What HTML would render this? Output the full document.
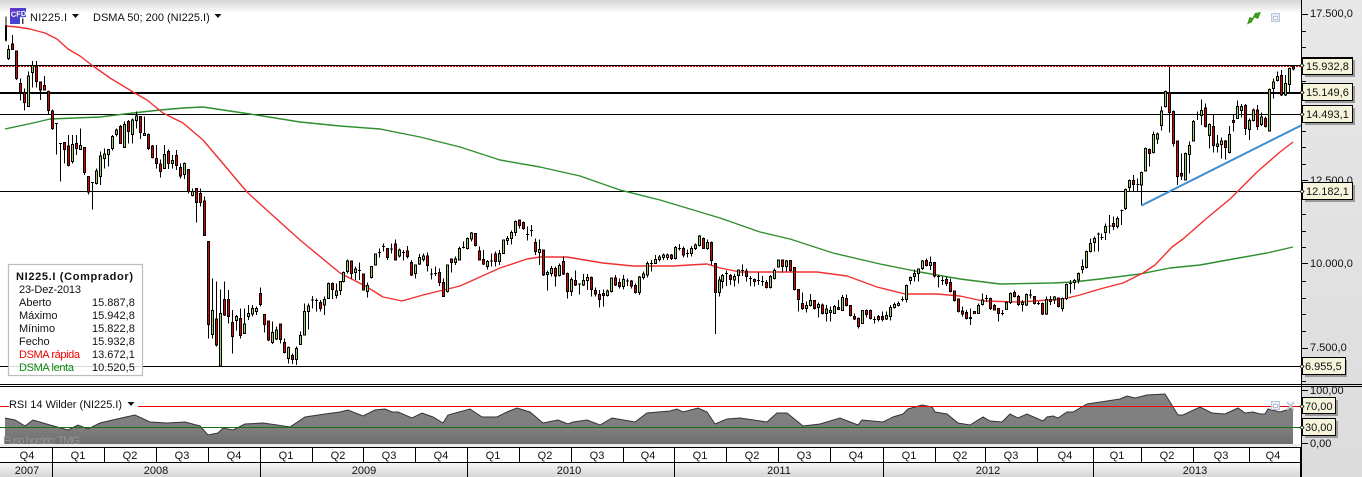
<!DOCTYPE html>
<html><head><meta charset="utf-8"><title>NI225.I</title>
<style>
html,body{margin:0;padding:0;background:#fff;width:1362px;height:477px;overflow:hidden}
svg{display:block;font-family:"Liberation Sans",sans-serif;font-size:11px;fill:#111}
.c path{vector-effect:non-scaling-stroke;stroke:#000;stroke-width:1;shape-rendering:crispEdges}
.w{fill:none}.g{fill:#9ccf66}.r{fill:#dd0000}
.tag{fill:#f6f5dc;stroke:#000}
.sh{fill:#9a9a9a;stroke:none}
.q{text-anchor:middle}
</style></head><body>
<svg width="1362" height="477" viewBox="0 0 1362 477" xmlns="http://www.w3.org/2000/svg">
<defs>
<linearGradient id="top" x1="0" y1="0" x2="0" y2="1"><stop offset="0" stop-color="#d4d4d4"/><stop offset="1" stop-color="#fff"/></linearGradient>
<linearGradient id="yr" x1="0" y1="0" x2="0" y2="1"><stop offset="0" stop-color="#f6f6f6"/><stop offset="1" stop-color="#d6d6d6"/></linearGradient>
<linearGradient id="rsi" gradientUnits="userSpaceOnUse" x1="0" y1="394" x2="0" y2="444"><stop offset="0" stop-color="#838383"/><stop offset=".7" stop-color="#7e7e7e"/><stop offset="1" stop-color="#6e6e6e"/></linearGradient>
<linearGradient id="ic" x1="0" y1="0" x2="1" y2="1"><stop offset="0" stop-color="#6a30c8"/><stop offset="1" stop-color="#3050d0"/></linearGradient>
<linearGradient id="pn" x1="0" y1="0" x2="0" y2="1"><stop offset="0" stop-color="#e8e8e8"/><stop offset="1" stop-color="#dcdcdc"/></linearGradient>
</defs>
<rect width="1362" height="477" fill="#fff"/>
<rect x="0" y="0" width="1301" height="13" fill="url(#top)"/>
<rect x="1301" y="0" width="61" height="477" fill="url(#pn)"/>

<!-- horizontal levels -->
<g shape-rendering="crispEdges">
<rect x="0" y="65" width="1301" height="1" fill="#000"/>
<line x1="0" y1="66.5" x2="1301" y2="66.5" stroke="#e00000" stroke-width="1" stroke-dasharray="2 1"/>
<rect x="0" y="92" width="1301" height="2" fill="#000"/>
<rect x="0" y="114" width="1301" height="1" fill="#000"/>
<rect x="0" y="191" width="1301" height="1" fill="#000"/>
<rect x="0" y="366" width="1301" height="1" fill="#000"/>
</g>

<!-- moving averages -->
<polyline fill="none" stroke="#2f8f2f" stroke-width="1.4" stroke-linejoin="round" points="5,129 33,123 50,119 100,117 133,113 160,110 183,108 203,107 250,114 300,122 340,126 380,129 420,137 460,147 500,160 540,167 580,176 620,190 660,200 720,218 760,232 790,239 833,253 880,264 920,272 960,279 1000,284 1053,283 1073,282 1100,279 1140,274 1170,268 1200,265 1233,259 1267,253 1293,247"/>
<polyline fill="none" stroke="#f23030" stroke-width="1.4" stroke-linejoin="round" points="6,26 17,27 30,29 45,33 57,39 68,49 80,56 93,66 110,78 133,92 147,100 163,113 183,123 203,140 220,160 247,192 270,213 300,240 340,273 367,287 383,297 402,301 423,295 460,286 500,268 527,259 540,257 567,257 603,263 633,266 673,266 707,264 720,268 740,272 780,272 817,272 847,276 877,287 905,294 937,294 960,296 983,301 1020,302 1063,299 1080,295 1100,289 1123,283 1143,273 1155,265 1172,247 1183,239 1207,218 1230,199 1257,172 1280,152 1293,142"/>

<!-- candles -->
<g class="c" transform="scale(.33333)">
<path class="w" d="M18 50V125M25 135V180M37 105V150M49 153V240M61 235V302M73 265V332M85 215V320M97 183V262M109 183V262M121 245V300M133 228V270M145 272V345M157 328V390M169 370V463M165 370h9M181 430V545M177 430h9M193 427V490M205 405V500M217 405V490M229 405V465M241 385V450M253 442V525M265 530V583M277 548V628M273 548h9M289 505V553M301 455V555M313 445V505M325 448V500M337 405V452M349 385V410M361 375V432M373 365V442M385 360V430M397 355V430M409 335V385M421 350V417M433 350V407M445 400V450M457 435V475M469 435V505M481 478V532M493 435V507M505 448V507M517 465V505M529 450V510M541 490V535M553 487V537M565 508V580M577 565V590M589 565V668M601 565V620M613 590V706"/>
<path class="g" d="M22 148h6V175h-6zM82 228h6V320h-6zM94 197h6V218h-6zM214 433h6V485h-6zM238 436h6V449h-6zM286 513h6V550h-6zM298 468h6V530h-6zM310 462h6V476h-6zM322 448h6V463h-6zM334 410h6V445h-6zM346 390h6V403h-6zM370 373h6V442h-6zM394 360h6V403h-6zM406 348h6V361h-6zM430 400h6V407h-6zM490 463h6V505h-6zM514 481h6V490h-6zM550 490h6V523h-6zM574 575h6V586h-6z"/>
<path class="r" d="M16 78h3V120h-3zM34 132h6V148h-6zM46 153h6V236h-6zM58 250h6V278h-6zM70 278h6V308h-6zM106 200h6V245h-6zM118 246h6V270h-6zM130 256h6V270h-6zM142 275h6V332h-6zM154 333h6V386h-6zM190 427h6V449h-6zM202 438h6V497h-6zM226 430h6V446h-6zM250 442h6V518h-6zM262 530h6V576h-6zM358 380h6V430h-6zM382 364h6V394h-6zM418 350h6V397h-6zM442 403h6V445h-6zM454 438h6V472h-6zM466 476h6V490h-6zM478 492h6V514h-6zM502 455h6V490h-6zM526 466h6V497h-6zM538 502h6V528h-6zM562 508h6V575h-6zM586 565h6V608h-6zM598 580h6V607h-6zM610 603h6V706h-6z"/>
</g>
<g class="c" transform="translate(0,240) scale(.33333)">
<path class="w" d="M625 5V295M637 115V295M649 125V320M661 148V378M673 125V228M685 150V250M697 210V340M709 225V272M721 205V295M733 205V280M745 195V240M757 195V230M769 200V225M781 143V200M793 223V278M805 243V303M817 245V312M829 260V300M841 250V310M853 295V340M865 320V370M877 340V372M889 320V375M901 275V315M913 190V285M925 190V268M937 168V205M933 180h9M949 175V215M945 182h9M961 180V215M973 170V225M985 128V175M997 128V177M1009 130V175M1021 125V165"/>
<path class="g" d="M634 212h6V283h-6zM658 220h6V378h-6zM706 229h6V241h-6zM730 252h6V280h-6zM742 220h6V230h-6zM754 205h6V222h-6zM766 205h6V215h-6zM814 277h6V307h-6zM826 270h6V297h-6zM862 322h6V355h-6zM886 325h6V358h-6zM898 286h6V313h-6zM910 215h6V285h-6zM922 198h6V215h-6zM970 178h6V195h-6zM982 130h6V175h-6zM1006 153h6V167h-6zM1018 125h6V152h-6z"/>
<path class="r" d="M622 5h6V253h-6zM646 237h6V315h-6zM670 178h6V225h-6zM682 178h6V230h-6zM694 247h6V290h-6zM718 235h6V287h-6zM778 160h6V193h-6zM790 223h6V253h-6zM802 243h6V300h-6zM838 252h6V298h-6zM850 307h6V337h-6zM874 346h6V358h-6zM958 187h6V205h-6zM994 130h6V148h-6z"/>
</g>
<g class="c" transform="translate(340,200) scale(.33333)">
<path class="w" d="M10 215V248M22 178V220M34 183V235M46 200V240M58 187V240M54 212h9M70 222V272M82 248V292M94 200V236M106 160V197M118 145V172M114 157h9M130 130V155M126 140h9M142 145V180M154 130V160M150 147h9M166 118V182M178 145V172M190 150V182M186 157h9M202 138V175M214 180V228M226 195V236M238 162V195M250 160V185M262 158V215M274 205V238M270 222h9M286 200V228M282 221h9M298 205V258M310 235V290M322 195V278M334 175V218M346 170V195M358 140V182M370 125V146M366 142h9M382 112V148M394 96V125M406 100V140M418 140V182M430 150V195M442 180V208M454 160V200M450 183h9M466 155V200M478 150V195M490 118V162M502 108V135M514 92V133M526 62V108M538 58V85M550 65V90M562 80V122M558 103h9M574 75V110M570 91h9M586 115V165M598 118V195M610 150V228M622 212V272M634 198V230M646 200V260M658 190V230M670 170V225M682 218V295M694 232V288M706 212V258M718 250V283M714 252h9M730 222V258M742 222V270M754 230V290M766 262V290M778 270V322M790 268V320M802 268V290M814 232V278M826 225V258M838 235V265M850 225V268M862 235V258M858 243h9M874 240V265M886 250V280M898 228V285M910 215V238M922 185V232M934 180V215M930 190h9M946 165V192M958 165V185M970 160V180M982 160V180M994 162V180M1006 138V178M1018 132V152M1014 146h9M1030 140V172M1042 148V172M1038 160h9M1054 138V170M1066 130V150M1078 105V140M1090 112V147M1102 118V150M1114 125V195M1126 190V402M1138 230V290"/>
<path class="g" d="M7 218h6V245h-6zM19 183h6V215h-6zM43 207h6V218h-6zM79 256h6V275h-6zM91 200h6V233h-6zM103 162h6V195h-6zM175 150h6V168h-6zM223 195h6V220h-6zM235 172h6V192h-6zM247 168h6V178h-6zM319 195h6V275h-6zM343 177h6V188h-6zM355 145h6V180h-6zM379 115h6V145h-6zM391 99h6V117h-6zM439 184h6V200h-6zM475 160h6V185h-6zM487 120h6V160h-6zM499 115h6V122h-6zM511 97h6V116h-6zM523 64h6V97h-6zM595 148h6V157h-6zM619 218h6V224h-6zM631 205h6V220h-6zM655 197h6V227h-6zM691 238h6V275h-6zM727 241h6V255h-6zM739 232h6V242h-6zM799 273h6V286h-6zM811 234h6V275h-6zM847 238h6V260h-6zM895 231h6V277h-6zM907 222h6V233h-6zM919 190h6V225h-6zM943 178h6V190h-6zM955 171h6V178h-6zM967 165h6V172h-6zM979 165h6V172h-6zM1003 142h6V176h-6zM1051 145h6V160h-6zM1063 135h6V145h-6zM1075 108h6V137h-6zM1099 127h6V145h-6zM1135 240h6V278h-6z"/>
<path class="r" d="M31 183h6V220h-6zM67 222h6V270h-6zM139 145h6V173h-6zM163 132h6V180h-6zM199 153h6V170h-6zM211 187h6V225h-6zM259 168h6V197h-6zM295 217h6V248h-6zM307 247h6V290h-6zM331 177h6V188h-6zM403 100h6V137h-6zM415 153h6V180h-6zM427 178h6V192h-6zM463 162h6V185h-6zM535 60h6V77h-6zM547 67h6V86h-6zM583 127h6V155h-6zM607 150h6V225h-6zM643 205h6V228h-6zM667 184h6V222h-6zM679 220h6V275h-6zM703 241h6V255h-6zM751 232h6V268h-6zM763 271h6V282h-6zM775 283h6V298h-6zM787 280h6V287h-6zM823 234h6V255h-6zM835 248h6V260h-6zM871 243h6V258h-6zM883 256h6V278h-6zM991 165h6V176h-6zM1027 146h6V165h-6zM1087 115h6V145h-6zM1111 127h6V182h-6zM1123 190h6V278h-6z"/>
</g>
<g class="c" transform="translate(720,200) scale(.33333)">
<path class="w" d="M7 222V265M19 212V258M15 220h9M31 222V255M43 222V260M55 208V250M67 193V228M63 212h9M79 205V245M91 228V258M87 236h9M103 235V260M115 218V255M111 242h9M127 228V258M123 245h9M139 240V265M151 225V265M163 205V238M175 178V203M187 178V218M199 180V215M211 180V215M223 203V272M235 268V335M247 278V330M259 305V338M271 282V320M283 300V328M295 308V352M307 310V343M319 315V365M331 320V365M343 315V342M355 300V330M367 285V333M379 283V320M391 316V350M403 340V360M415 353V385M427 330V372M439 328V352M451 328V358M463 350V370M459 358h9M475 345V365M487 335V365M499 335V360M511 315V362M523 307V325M535 305V320M547 290V305M543 298h9M559 254V308M571 230V254M583 208V245M595 205V245M607 180V210M619 175V200M631 170V210M643 187V232M655 225V262M651 230h9M667 230V255M663 241h9M679 230V258M691 235V278M703 272V305M715 295V338M727 320V350M739 330V358M751 325V375M763 333V342M775 310V342M787 280V316M799 285V305M795 296h9M811 293V330M823 312V332M835 325V365M847 330V347M843 341h9M859 305V330M871 278V312M883 272V292M895 285V318M907 300V335M919 280V318M931 268V295M927 285h9M943 288V313M955 305V315M951 310h9M967 308V345M979 290V345M991 288V315M1003 288V312M1015 292V322M1027 292V335M1039 250V300M1051 240V280M1047 250h9M1063 237V268M1075 218V250M1087 178V220M1099 152V205M1111 115V158M1123 110V155M1135 97V155M1131 102h9"/>
<path class="g" d="M4 226h6V245h-6zM40 230h6V240h-6zM52 210h6V226h-6zM148 229h6V263h-6zM160 212h6V236h-6zM172 180h6V201h-6zM196 183h6V200h-6zM256 316h6V325h-6zM268 301h6V317h-6zM292 313h6V323h-6zM316 327h6V340h-6zM328 331h6V338h-6zM340 320h6V340h-6zM364 292h6V331h-6zM424 331h6V370h-6zM496 347h6V357h-6zM508 322h6V349h-6zM520 314h6V323h-6zM532 310h6V316h-6zM556 256h6V298h-6zM568 233h6V242h-6zM580 220h6V230h-6zM592 207h6V220h-6zM604 183h6V205h-6zM628 187h6V197h-6zM772 316h6V340h-6zM784 300h6V314h-6zM856 307h6V328h-6zM868 280h6V308h-6zM904 307h6V314h-6zM916 283h6V315h-6zM976 298h6V342h-6zM1000 291h6V300h-6zM1024 295h6V326h-6zM1036 253h6V296h-6zM1060 241h6V247h-6zM1072 220h6V240h-6zM1084 199h6V209h-6zM1096 154h6V203h-6zM1108 130h6V155h-6zM1120 115h6V127h-6z"/>
<path class="r" d="M28 226h6V238h-6zM76 213h6V230h-6zM100 238h6V245h-6zM136 247h6V263h-6zM184 180h6V200h-6zM208 181h6V212h-6zM220 203h6V268h-6zM232 268h6V298h-6zM244 310h6V325h-6zM280 301h6V325h-6zM304 315h6V340h-6zM352 322h6V328h-6zM376 296h6V317h-6zM388 316h6V347h-6zM400 350h6V357h-6zM412 355h6V380h-6zM436 332h6V343h-6zM448 331h6V355h-6zM472 350h6V358h-6zM484 350h6V358h-6zM616 181h6V197h-6zM640 187h6V228h-6zM676 238h6V250h-6zM688 247h6V275h-6zM700 273h6V302h-6zM712 297h6V335h-6zM724 333h6V342h-6zM736 337h6V355h-6zM748 352h6V355h-6zM760 335h6V340h-6zM808 295h6V326h-6zM820 316h6V330h-6zM832 326h6V340h-6zM880 278h6V290h-6zM892 290h6V314h-6zM940 290h6V310h-6zM964 310h6V342h-6zM988 299h6V304h-6zM1012 294h6V320h-6z"/>
</g>
<g class="c" transform="translate(1100,0) scale(.33333)">
<path class="w" d="M5 700V720M1 712h9M17 670V720M29 645V700M25 678h9M41 650V690M53 650V685M65 628V675M61 632h9M77 565V630M89 538V575M101 525V575M113 535V575M109 553h9M125 515V616M137 443V515M149 445V500M161 395V460M173 398V432M185 320V392M197 272V322M209 200V398M221 332V440M233 423V555M245 460V540M257 458V540M269 425V520M281 360V425M293 335V360M289 344h9M305 298V375M317 310V382M329 370V445M341 345V458M353 405V458M365 412V475M377 420V478M389 378V460M401 345V395M413 302V357M425 312V352M437 312V405M449 355V420M461 325V365M473 315V390M485 338V378M497 350V382M509 265V395M521 235V295M533 215V245M545 210V288M557 225V288M569 203V278M581 198V212"/>
<path class="g" d="M14 680h6V697h-6zM50 655h6V680h-6zM74 568h6V625h-6zM86 541h6V562h-6zM122 517h6V555h-6zM134 445h6V513h-6zM158 403h6V458h-6zM170 402h6V417h-6zM182 333h6V377h-6zM194 275h6V320h-6zM254 460h6V540h-6zM266 436h6V463h-6zM278 364h6V423h-6zM302 332h6V347h-6zM326 373h6V407h-6zM350 432h6V440h-6zM362 423h6V433h-6zM386 403h6V458h-6zM410 320h6V355h-6zM422 319h6V332h-6zM446 362h6V388h-6zM458 330h6V362h-6zM482 351h6V373h-6zM506 268h6V393h-6zM518 246h6V265h-6zM530 229h6V242h-6zM554 250h6V285h-6zM566 205h6V253h-6z"/>
<path class="r" d="M38 670h6V680h-6zM98 541h6V553h-6zM146 448h6V460h-6zM206 278h6V338h-6zM218 335h6V430h-6zM230 423h6V530h-6zM242 520h6V528h-6zM314 324h6V380h-6zM338 380h6V437h-6zM374 423h6V443h-6zM398 361h6V368h-6zM434 316h6V385h-6zM470 330h6V380h-6zM494 355h6V380h-6zM542 226h6V285h-6zM578 200h6V207h-6z"/>
</g>

<!-- trend line -->
<line x1="1141.5" y1="205.5" x2="1302" y2="125" stroke="#3b8fd2" stroke-width="2"/>

<!-- header -->
<rect x="10" y="8" width="16" height="16" fill="url(#ic)"/>
<text x="11" y="17" font-size="7.5" font-weight="bold" style="fill:#fff" transform="rotate(-4 11 17)">CFD</text>
<rect x="20" y="17" width="6" height="7" fill="#fff"/>
<text x="21.5" y="24" font-size="9" font-weight="bold" style="fill:#112">i</text>
<text x="30" y="21" textLength="37">NI225.I</text>
<path d="M72 14h7l-3.500 4z" fill="#111"/>
<text x="93" y="21">DSMA 50; 200 (NI225.I)</text>
<path d="M214.500 14h7l-3.500 4z" fill="#111"/>
<path d="M1247 24.500L1249.500 17L1252.500 18L1255 13L1261 12L1258 19L1254.500 17.500L1251.500 22.500Z" fill="#3a9a1c"/>
<rect x="1271.500" y="13.500" width="8" height="8" fill="#e6eaf2" stroke="#b9c5da"/>
<rect x="1273.500" y="16.500" width="4" height="3" fill="#fff" stroke="#b9c5da"/>

<!-- info box -->
<rect x="8.500" y="264.500" width="134" height="111" fill="#fff" fill-opacity=".85" stroke="#bdbdbd" stroke-width="1.200"/>
<text x="16" y="280" font-weight="bold" textLength="117">NI225.I (Comprador)</text>
<text x="19" y="293" textLength="62">23-Dez-2013</text>
<text x="19" y="306">Aberto</text><text x="92" y="306">15.887,8</text>
<text x="19" y="319">Máximo</text><text x="92" y="319">15.942,8</text>
<text x="19" y="332">Mínimo</text><text x="92" y="332">15.822,8</text>
<text x="19" y="345">Fecho</text><text x="92" y="345">15.932,8</text>
<text x="19" y="358" style="fill:#f00000" textLength="61">DSMA rápida</text><text x="92" y="358">13.672,1</text>
<text x="19" y="371" style="fill:#0a8a0a" textLength="55">DSMA lenta</text><text x="92" y="371">10.520,5</text>

<!-- pane separator -->
<g shape-rendering="crispEdges">
<rect x="0" y="384" width="1362" height="1" fill="#000"/>
<rect x="0" y="386" width="1362" height="1" fill="#000"/>
<rect x="1301" y="0" width="1" height="447" fill="#000"/>
</g>

<!-- RSI -->
<rect x="0" y="444" width="1301" height="3" fill="#ececec"/>
<polygon fill="url(#rsi)" stroke="none" points="5,444 5,418 15,420 25,426 33,420 50,425 68,430 78,425 88,429 100,423 117,419 135,415 150,422 167,423 185,422 200,426 208,435 218,433 223,428 233,430 245,424 263,423 277,425 290,427 305,417 325,414 340,412 348,410 363,416 375,410 385,409 392,412 398,412 412,418 422,413 433,417 443,423 448,415 470,409 482,417 497,417 507,412 517,408 530,412 543,423 558,420 568,424 573,422 587,420 600,425 612,418 635,422 647,413 670,411 677,409 683,412 698,408 707,412 715,424 727,419 740,418 767,422 777,413 787,413 803,426 820,424 840,418 858,425 862,420 883,422 893,417 903,414 908,409 922,405 932,407 935,412 947,414 958,423 970,425 983,417 990,421 1002,422 1010,414 1018,418 1027,414 1043,421 1047,417 1053,416 1058,418 1067,412 1073,412 1087,404 1107,401 1120,399 1127,396 1135,398 1147,395 1165,394 1178,415 1183,415 1200,407 1212,413 1225,414 1238,408 1245,413 1253,412 1260,414 1265,414 1268,409 1280,412 1293,408 1293,444"/>
<polyline fill="none" stroke="#333" stroke-width="1" points="5,418 15,420 25,426 33,420 50,425 68,430 78,425 88,429 100,423 117,419 135,415 150,422 167,423 185,422 200,426 208,435 218,433 223,428 233,430 245,424 263,423 277,425 290,427 305,417 325,414 340,412 348,410 363,416 375,410 385,409 392,412 398,412 412,418 422,413 433,417 443,423 448,415 470,409 482,417 497,417 507,412 517,408 530,412 543,423 558,420 568,424 573,422 587,420 600,425 612,418 635,422 647,413 670,411 677,409 683,412 698,408 707,412 715,424 727,419 740,418 767,422 777,413 787,413 803,426 820,424 840,418 858,425 862,420 883,422 893,417 903,414 908,409 922,405 932,407 935,412 947,414 958,423 970,425 983,417 990,421 1002,422 1010,414 1018,418 1027,414 1043,421 1047,417 1053,416 1058,418 1067,412 1073,412 1087,404 1107,401 1120,399 1127,396 1135,398 1147,395 1165,394 1178,415 1183,415 1200,407 1212,413 1225,414 1238,408 1245,413 1253,412 1260,414 1265,414 1268,409 1280,412 1293,408"/>
<g shape-rendering="crispEdges">
<rect x="0" y="406" width="1301" height="1" fill="#f00000"/>
<rect x="0" y="427" width="1301" height="1" fill="#1a6e1a"/>
</g>
<rect x="9" y="398" width="129" height="11" fill="#fff"/>
<text x="9" y="408" textLength="113">RSI 14 Wilder (NI225.I)</text>
<path d="M127.500 402h7l-3.500 4z" fill="#111"/>
<text x="3" y="444" style="fill:#949494" textLength="77">Fuso horário: TMG</text>
<rect x="1271.500" y="401.500" width="8" height="8" fill="#e6eaf2" fill-opacity=".8" stroke="#b9c5da"/>
<rect x="1273.500" y="404.500" width="4" height="3" fill="#fff" stroke="#b9c5da"/>
<path d="M1287 402L1294 410M1294 402L1287 410" stroke="#c4cad6" stroke-width="2"/>

<!-- bottom axis -->
<rect x="0" y="447" width="1301" height="16" fill="#fff"/>
<rect x="0" y="463" width="1301" height="14" fill="url(#yr)"/>
<g shape-rendering="crispEdges" fill="#000">
<rect x="0" y="447" width="1301" height="1"/>
<rect x="0" y="462" width="1301" height="1"/>
<rect x="1300" y="447" width="2" height="30"/>
<path d="M52 448h1v29h-1zM260 448h1v29h-1zM467 448h1v29h-1zM674 448h1v29h-1zM883 448h1v29h-1zM1093 448h1v29h-1zM104 448h1v15h-1zM156 448h1v15h-1zM208 448h1v15h-1zM312 448h1v15h-1zM363 448h1v15h-1zM415 448h1v15h-1zM519 448h1v15h-1zM571 448h1v15h-1zM623 448h1v15h-1zM726 448h1v15h-1zM778 448h1v15h-1zM830 448h1v15h-1zM935 448h1v15h-1zM985 448h1v15h-1zM1037 448h1v15h-1zM1141 448h1v15h-1zM1193 448h1v15h-1zM1249 448h1v15h-1z"/>
</g>
<g class="q">
<text x="27" y="459">Q4</text><text x="78" y="459">Q1</text><text x="130" y="459">Q2</text><text x="182" y="459">Q3</text><text x="234" y="459">Q4</text><text x="286" y="459">Q1</text><text x="338" y="459">Q2</text><text x="389" y="459">Q3</text><text x="441" y="459">Q4</text><text x="493" y="459">Q1</text><text x="545" y="459">Q2</text><text x="597" y="459">Q3</text><text x="648" y="459">Q4</text><text x="700" y="459">Q1</text><text x="752" y="459">Q2</text><text x="804" y="459">Q3</text><text x="856" y="459">Q4</text><text x="909" y="459">Q1</text><text x="960" y="459">Q2</text><text x="1011" y="459">Q3</text><text x="1065" y="459">Q4</text><text x="1117" y="459">Q1</text><text x="1167" y="459">Q2</text><text x="1221" y="459">Q3</text><text x="1273" y="459">Q4</text>
<text x="27" y="474">2007</text><text x="156" y="474">2008</text><text x="364" y="474">2009</text><text x="569" y="474">2010</text><text x="779" y="474">2011</text><text x="988" y="474">2012</text><text x="1195" y="474">2013</text>
</g>

<!-- right axis ticks -->
<path shape-rendering="crispEdges" stroke="#000" fill="none" d="M1302 14.500h6M1302 31.500h4M1302 47.500h4M1302 64.500h4M1302 81.500h4M1302 97.500h6M1302 114.500h4M1302 131.500h4M1302 147.500h4M1302 164.500h4M1302 180.500h6M1302 197.500h4M1302 214.500h4M1302 231.500h4M1302 247.500h4M1302 263.500h6M1302 281.500h4M1302 298.500h4M1302 314.500h4M1302 331.500h4M1302 348.500h6M1302 364.500h4M1302 381.500h4M1302 390.500h6M1302 443.500h6"/>
<text x="1310" y="17">17.500,0</text>
<text x="1310" y="184">12.500,0</text>
<text x="1310" y="267">10.000,0</text>
<text x="1310" y="351">7.500,0</text>
<text x="1310" y="394">100,00</text>
<text x="1310" y="447">0,00</text>

<!-- tags -->
<g shape-rendering="crispEdges">
<rect class="sh" x="1305" y="60" width="50" height="17"/>
<rect class="tag" x="1302.500" y="57.500" width="50" height="17" stroke-width="1"/>
<rect x="1302" y="57" width="51" height="2" fill="#000"/>
<rect class="sh" x="1305" y="86" width="50" height="17"/>
<rect class="tag" x="1302.500" y="83.500" width="50" height="17"/>
<rect class="sh" x="1305" y="108" width="50" height="17"/>
<rect class="tag" x="1302.500" y="105.500" width="50" height="17"/>
<rect class="sh" x="1305" y="185" width="50" height="17"/>
<rect class="tag" x="1302.500" y="182.500" width="50" height="17"/>
<rect class="sh" x="1305" y="360" width="42" height="17"/>
<rect class="tag" x="1302.500" y="357.500" width="43" height="17"/>
<rect class="sh" x="1305" y="400" width="33" height="16"/>
<rect class="tag" x="1302.500" y="397.500" width="33" height="16"/>
<rect class="sh" x="1305" y="421" width="33" height="17"/>
<rect class="tag" x="1302.500" y="418.500" width="33" height="17"/>
</g>
<path d="M1300 65.500l2 -2 2 2-2 2zM1300 92.500l2 -2 2 2-2 2zM1300 114.500l2 -2 2 2-2 2zM1300 191.500l2 -2 2 2-2 2zM1300 366.500l2 -2 2 2-2 2zM1300 406.500l2 -2 2 2-2 2zM1300 427.500l2 -2 2 2-2 2z" fill="#f6f5dc" stroke="#000" stroke-width=".8"/>
<text x="1306" y="70">15.932,8</text>
<text x="1306" y="96">15.149,6</text>
<text x="1306" y="118">14.493,1</text>
<text x="1306" y="195">12.182,1</text>
<text x="1305" y="370">6.955,5</text>
<text x="1305" y="410">70,00</text>
<text x="1305" y="431">30,00</text>
</svg>
</body></html>
